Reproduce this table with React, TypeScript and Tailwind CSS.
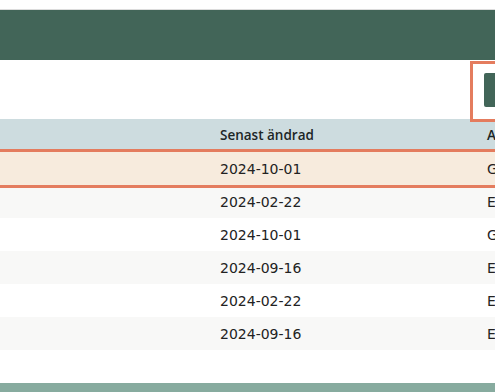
import React from "react";

const rows = [
  { date: "2024-10-01", a: "G", hl: true },
  { date: "2024-02-22", a: "E" },
  { date: "2024-10-01", a: "G" },
  { date: "2024-09-16", a: "E" },
  { date: "2024-02-22", a: "E" },
  { date: "2024-09-16", a: "E" },
];

export default function App() {
  return (
    <div className="relative w-[495px] h-[392px] overflow-hidden bg-white" style={{ fontFamily: "'DejaVu Sans', sans-serif" }}>
      <div className="w-[495px]">
        <div className="h-[10px] border-b border-[#dcdcdc] bg-white" />
        <div className="h-[50px] bg-[#426558]" />
        <div className="h-[59px] flex items-start pt-[13px] pl-[484px]">
          <div className="h-[34px] w-[11px] rounded-l-[2px] bg-[#426558]" />
        </div>
        <div className="grid grid-cols-[208px_279px_8px] h-[33px] items-center bg-[#cddcdf] text-[13.5px] text-[#1c2626] font-semibold" style={{ fontFamily: "'Open Sans', sans-serif" }}>
          <div />
          <div className="pl-[12px]">Senast ändrad</div>
          <div>A</div>
        </div>
        {rows.map((r, i) => (
          <div
            key={i}
            className={
              r.hl
                ? "relative z-10 grid grid-cols-[208px_279px_8px] h-[33px] items-center pt-[2px] text-[14px] text-[#222] bg-[#f7ebdd] outline outline-[3px] outline-[#e47c5e]"
                : i % 2 === 1
                ? "grid grid-cols-[208px_279px_8px] h-[33px] items-center pt-[2px] text-[14px] text-[#222] bg-[#f8f8f7]"
                : "grid grid-cols-[208px_279px_8px] h-[33px] items-center pt-[2px] text-[14px] text-[#222] bg-white"
            }
          >
            <div />
            <div className="pl-[12px]">{r.date}</div>
            <div>{r.a}</div>
          </div>
        ))}
        <div className="h-[33px] bg-white" />
        <div className="h-[20px] bg-[#87ab9f]" />
      </div>
      <div className="absolute left-[470px] top-[61px] h-[61px] w-[40px] border-[3px] border-[#e47c5e]" />
    </div>
  );
}
